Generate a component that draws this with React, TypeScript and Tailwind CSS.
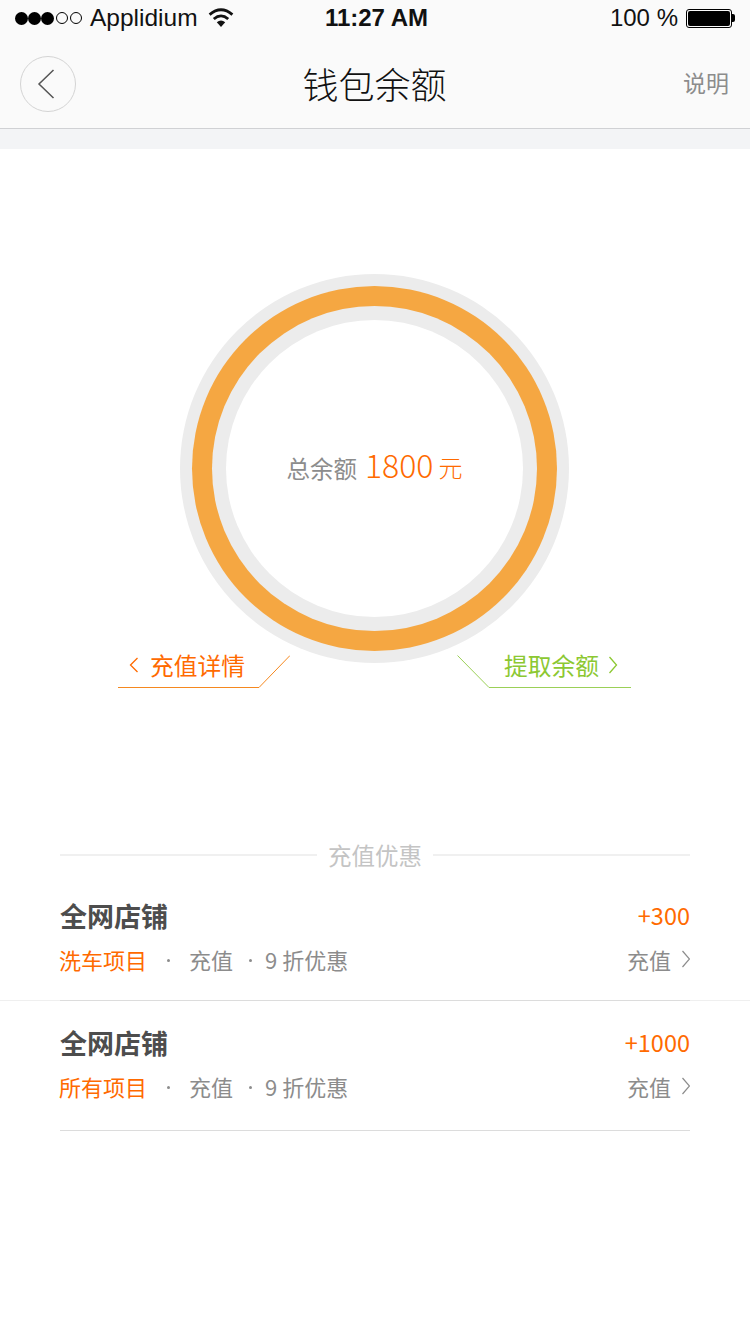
const cjk = "font-['Noto_Sans_CJK_SC','Noto_Sans',sans-serif]";

function StatusBar() {
  return (
    <div className="flex h-[40px] items-center justify-between pb-[4px] pl-[15px] pr-[15px] font-['Liberation_Sans',sans-serif] text-[#111]">
      <div className="flex w-[260px] items-center">
        <div className="flex items-center">
          {[0, 1, 2].map((i) => (
            <span key={i} className="h-[13px] w-[13px] rounded-full bg-black" />
          ))}
          {[0, 1].map((i) => (
            <span key={i} className="ml-[2px] h-[12px] w-[12px] rounded-full border border-black" />
          ))}
        </div>
        <span className="ml-[8px] text-[24.5px] leading-none">Applidium</span>
        <svg className="ml-[10px]" width="26" height="20" viewBox="0 0 26 20">
          <path d="M13 19 L8.8 14.2 Q13 10.8 17.2 14.2 Z" fill="#111" />
          <path d="M5.8 11 Q13 4.8 20.2 11" fill="none" stroke="#111" strokeWidth="2.8" />
          <path d="M1.6 6.6 Q13 -3 24.4 6.6" fill="none" stroke="#111" strokeWidth="2.8" />
        </svg>
      </div>
      <span className="ml-[3px] text-[24px] font-bold leading-none">11:27 AM</span>
      <div className="flex w-[260px] items-center justify-end">
        <span className="text-[24px] leading-none">100 %</span>
        <div className="ml-[8px] flex h-[19px] w-[46px] items-center rounded-[3px] border border-black p-[1px]">
          <div className="h-full w-full rounded-[2px] bg-black" />
        </div>
        <div className="h-[8px] w-[3px] rounded-r-[2px] bg-black" />
      </div>
    </div>
  );
}

function NavBar() {
  return (
    <div className="flex h-[89px] items-center justify-between border-b border-[#d0d1d4] pl-[20px] pr-[21px]">
      <div className="w-[60px]">
        <div className="flex h-[56px] w-[56px] items-center justify-center rounded-full border border-[#d4d4d4] pr-[5px]">
          <svg width="18" height="30" viewBox="0 0 18 30">
            <path d="M16.5 1 L2 15 L16.5 29" fill="none" stroke="#555" strokeWidth="1.5" />
          </svg>
        </div>
      </div>
      <span className="mb-[2px] text-[36px] font-light leading-none text-[#111]">钱包余额</span>
      <span className="mb-[3px] w-[60px] text-right text-[23px] leading-none text-[#8c8c8c]">说明</span>
    </div>
  );
}

function Ring() {
  return (
    <div className="ml-[180px] mt-[125px] flex h-[389px] w-[389px] items-center justify-center rounded-full bg-[#ececec]">
      <div className="flex h-[365px] w-[365px] items-center justify-center rounded-full bg-[#f5a742]">
        <div className="flex h-[325px] w-[325px] items-center justify-center rounded-full bg-[#ececec]">
          <div className="flex h-[297px] w-[297px] items-center justify-center rounded-full bg-white pb-[10px]">
            <div className="flex items-baseline">
              <span className="text-[23.5px] text-[#8c8c8c]">总余额</span>
              <span className="ml-[8px] text-[32px] font-light text-[#ff6a00]">1800</span>
              <span className="ml-[5px] -translate-y-px text-[24px] font-light text-[#ff6a00]">元</span>
            </div>
          </div>
        </div>
      </div>
    </div>
  );
}

function Links() {
  return (
    <div className="-mt-[8px] flex justify-between pl-[118px] pr-[119px]">
      <div className="relative h-[34px] w-[172px]">
        <svg className="absolute left-0 top-0" width="172" height="34" viewBox="0 0 172 34">
          <path d="M0 32.5 H141 L172 0.5" fill="none" stroke="#f5881f" strokeWidth="1" />
        </svg>
        <div className="flex h-[19px] items-center pl-[11px] text-[#ff6a00]">
          <svg width="10" height="16" viewBox="0 0 10 16">
            <path d="M8.5 1 L1.5 8 L8.5 15" fill="none" stroke="#ff6a00" strokeWidth="1.3" />
          </svg>
          <span className="ml-[11px] text-[23.75px] leading-none">充值详情</span>
        </div>
      </div>
      <div className="relative h-[34px] w-[174px]">
        <svg className="absolute left-0 top-0" width="174" height="34" viewBox="0 0 174 34">
          <path d="M0.5 0.5 L32 32.5 H174" fill="none" stroke="#9bd057" strokeWidth="1" />
        </svg>
        <div className="flex h-[19px] items-center justify-end pr-[13px] text-[#8cc832]">
          <span className="mr-[9px] text-[23.75px] leading-none">提取余额</span>
          <svg width="10" height="18" viewBox="0 0 10 18">
            <path d="M1.5 1 L8.5 9 L1.5 17" fill="none" stroke="#8cc832" strokeWidth="1.3" />
          </svg>
        </div>
      </div>
    </div>
  );
}

function Promo({ scope, amount }: { scope: string; amount: string }) {
  return (
    <div className="px-[60px]">
      <div className="flex h-[34px] items-center justify-between">
        <span className="text-[27px] font-bold leading-none text-[#4d4d4d]">全网店铺</span>
        <span className="text-[23.5px] leading-none text-[#ff6a00]">{amount}</span>
      </div>
      <div className="mt-[9px] flex h-[34px] items-center justify-between text-[22px] leading-none text-[#8c8c8c]">
        <div className="flex items-center">
          <span className="-ml-[1px] text-[#ff6a00]">{scope}</span>
          <span className="ml-[20px] mt-[4px] h-[3px] w-[3px] rounded-full bg-[#8c8c8c]" />
          <span className="ml-[19px]">充值</span>
          <span className="ml-[16px] mt-[4px] h-[3px] w-[3px] rounded-full bg-[#8c8c8c]" />
          <span className="ml-[13px]">9 折优惠</span>
        </div>
        <div className="flex items-center">
          <span>充值</span>
          <svg className="ml-[11px] mt-[1px]" width="8" height="18" viewBox="0 0 8 18">
            <path d="M0.5 1 L7.5 9 L0.5 17" fill="none" stroke="#8c8c8c" strokeWidth="1.2" />
          </svg>
        </div>
      </div>
    </div>
  );
}

export default function App() {
  return (
    <div className={`h-[1334px] w-[750px] overflow-hidden bg-white ${cjk}`}>
      <div className="bg-[#fafafa]">
        <StatusBar />
        <NavBar />
      </div>
      <div className="h-[20px] bg-[#f3f4f6]" />
      <Ring />
      <Links />

      <div className="mt-[154px] flex items-center px-[60px]">
        <div className="h-[2px] flex-1 bg-[#f0f0f0]" />
        <span className="mx-[11px] translate-y-px text-[23.5px] leading-none text-[#c4c4c4]">充值优惠</span>
        <div className="h-[2px] flex-1 bg-[#f0f0f0]" />
      </div>

      <div className="mt-[32px]">
        <div className="pb-[24px]">
          <Promo scope="洗车项目" amount="+300" />
        </div>
        <div className="h-px bg-[#efefef] px-[60px]">
          <div className="h-px bg-[#dcdcdc]" />
        </div>
        <div className="pb-[27px] pt-[25px]">
          <Promo scope="所有项目" amount="+1000" />
        </div>
        <div className="mx-[60px] h-px bg-[#dcdcdc]" />
      </div>
    </div>
  );
}
